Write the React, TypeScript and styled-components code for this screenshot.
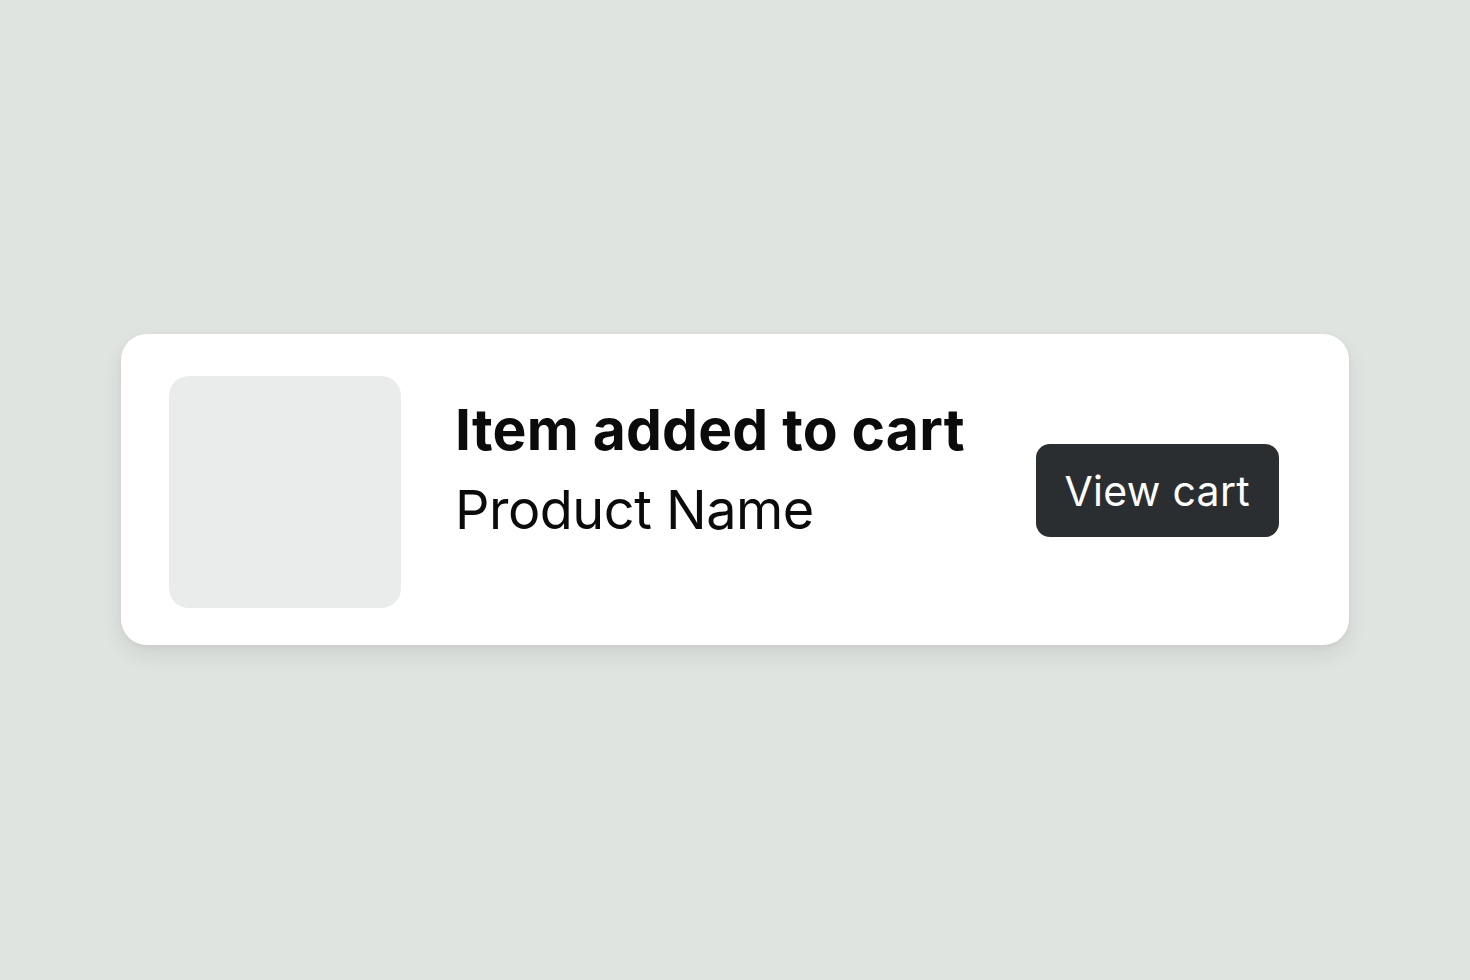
import React from "react";
import styled, { createGlobalStyle } from "styled-components";

const Global = createGlobalStyle`
  html, body { margin: 0; padding: 0; }
  body {
    background: #e0e4e1;
    font-family: Inter, "Noto Sans", sans-serif;
    -webkit-font-smoothing: antialiased;
  }
`;

const Page = styled.div`
  width: 1470px;
  height: 980px;
  display: flex;
  justify-content: center;
  padding-top: 334px;
  box-sizing: border-box;
`;

const Card = styled.div`
  width: 1228px;
  height: 311px;
  box-sizing: border-box;
  background: #ffffff;
  border-radius: 26px;
  box-shadow: 0 10px 22px rgba(0, 0, 0, 0.08), 0 2px 6px rgba(0, 0, 0, 0.04);
  display: flex;
  align-items: center;
  padding: 0 70px 0 48px;
`;

const Thumb = styled.div`
  width: 232px;
  height: 232px;
  border-radius: 20px;
  background: #eaebeb;
  flex-shrink: 0;
  margin-top: 4px;
`;

const Text = styled.div`
  flex: 1;
  display: flex;
  flex-direction: column;
  margin-left: 55px;
  margin-bottom: 40px;
  color: #0b0b0b;
`;

const Title = styled.div`
  font-size: 57px;
  font-weight: 700;
  letter-spacing: 0.2px;
  line-height: 80px;
  margin-left: -1px;
`;

const Subtitle = styled.div`
  font-size: 54px;
  font-weight: 400;
  letter-spacing: -0.5px;
  line-height: 80px;
  margin-left: -1px;
`;

const Button = styled.button`
  height: 93px;
  padding: 0 29px;
  border: none;
  border-radius: 14px;
  background: #2b2e31;
  color: #ffffff;
  font-family: Inter, "Noto Sans", sans-serif;
  font-size: 41px;
  font-weight: 400;
  letter-spacing: 0.3px;
  flex-shrink: 0;
  margin-top: 2px;
`;

export default function App() {
  return (
    <>
      <Global />
      <Page>
        <Card>
          <Thumb />
          <Text>
            <Title>Item added to cart</Title>
            <Subtitle>Product Name</Subtitle>
          </Text>
          <Button>View cart</Button>
        </Card>
      </Page>
    </>
  );
}
